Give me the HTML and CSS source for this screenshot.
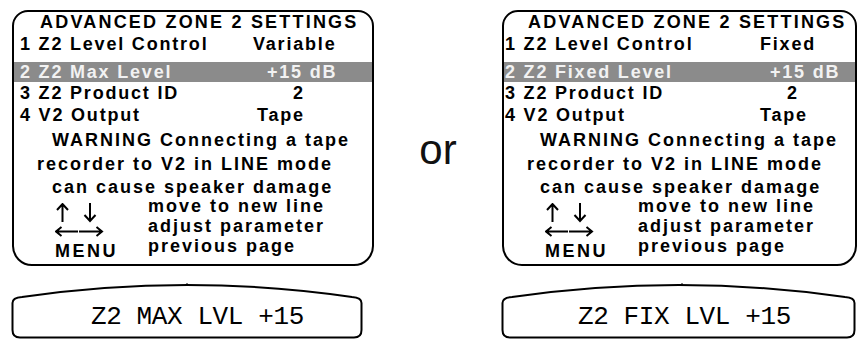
FILE: index.html
```html
<!DOCTYPE html>
<html lang="en">
<head>
  <meta charset="UTF-8">
  <title>Advanced Zone 2 Settings</title>
  <link rel="stylesheet" href="styles.css">
</head>
<body>
  <div class="sheet">

    <!-- variable level control -->
    <div class="col col-a">
      <div class="panel">
        <div class="title">ADVANCED ZONE 2 SETTINGS</div>
        <div class="row first"><span class="label">1 Z2 Level Control</span><span class="value">Variable</span></div>
        <div class="row sel"><span class="label">2 Z2 Max Level</span><span class="value val-level">+15 dB</span></div>
        <div class="row"><span class="label">3 Z2 Product ID</span><span class="value val-id">2</span></div>
        <div class="row"><span class="label">4 V2 Output</span><span class="value val-out">Tape</span></div>
        <div class="note note-1">WARNING Connecting a tape</div>
        <div class="note note-2">recorder to V2 in LINE mode</div>
        <div class="note note-3">can cause speaker damage</div>
        <div class="keys">
          <div class="keys-icons">
            <svg class="arrows" width="50" height="34" viewBox="0 0 50 34">
              <path d="M7.5 1 V19 M2 7 L7.5 1 L13 7" />
              <path d="M35 0 V18 M29.5 12 L35 18 L40.5 12" />
              <path d="M1 28.5 H23 M6.5 24 L1 28.5 L6.5 33" />
              <path d="M24 28.5 H47 M41.5 24 L47 28.5 L41.5 33" />
            </svg>
            <div class="menu">MENU</div>
          </div>
          <div class="keys-text">
            <div>move to new line</div>
            <div>adjust parameter</div>
            <div>previous page</div>
          </div>
        </div>
      </div>
      <div class="lcd">
        <svg class="lcd-frame" width="352" height="56" viewBox="0 0 352 56">
          <path d="M1.5 47 L1.5 20 Q1.5 14.5 11 14 Q176 -10 341 14 Q350.5 14.5 350.5 20 L350.5 47 Q350.5 54.5 343 54.5 L9 54.5 Q1.5 54.5 1.5 47 Z" />
          <path class="tick" d="M176 0 V3" />
        </svg>
        <div class="lcd-text">Z2 MAX LVL +15</div>
      </div>
    </div>

    <div class="divider">or</div>

    <!-- fixed level control -->
    <div class="col col-b">
      <div class="panel">
        <div class="title">ADVANCED ZONE 2 SETTINGS</div>
        <div class="row first"><span class="label">1 Z2 Level Control</span><span class="value">Fixed</span></div>
        <div class="row sel"><span class="label">2 Z2 Fixed Level</span><span class="value val-level">+15 dB</span></div>
        <div class="row"><span class="label">3 Z2 Product ID</span><span class="value val-id">2</span></div>
        <div class="row"><span class="label">4 V2 Output</span><span class="value val-out">Tape</span></div>
        <div class="note note-1">WARNING Connecting a tape</div>
        <div class="note note-2">recorder to V2 in LINE mode</div>
        <div class="note note-3">can cause speaker damage</div>
        <div class="keys">
          <div class="keys-icons">
            <svg class="arrows" width="50" height="34" viewBox="0 0 50 34">
              <path d="M7.5 1 V19 M2 7 L7.5 1 L13 7" />
              <path d="M35 0 V18 M29.5 12 L35 18 L40.5 12" />
              <path d="M1 28.5 H23 M6.5 24 L1 28.5 L6.5 33" />
              <path d="M24 28.5 H47 M41.5 24 L47 28.5 L41.5 33" />
            </svg>
            <div class="menu">MENU</div>
          </div>
          <div class="keys-text">
            <div>move to new line</div>
            <div>adjust parameter</div>
            <div>previous page</div>
          </div>
        </div>
      </div>
      <div class="lcd">
        <svg class="lcd-frame" width="355" height="56" viewBox="0 0 355 56">
          <path d="M1.5 47 L1.5 20 Q1.5 14.5 11 14 Q178 -10 344 14 Q353.5 14.5 353.5 20 L353.5 47 Q353.5 54.5 346 54.5 L9 54.5 Q1.5 54.5 1.5 47 Z" />
          <path class="tick" d="M181 0 V3" />
        </svg>
        <div class="lcd-text">Z2 FIX LVL +15</div>
      </div>
    </div>

  </div>
</body>
</html>
```

FILE: styles.css
```css
body {
  margin: 0;
  background-color: white;
  color: black;
  font-family: "Liberation Sans", Arial, sans-serif;
}

.sheet {
  display: flex;
  padding: 10px 0 0 12px;
}

.col {
  display: flex;
  flex-direction: column;
  flex-shrink: 0;
}

.col-a {
  width: 362px;
}

.col-b {
  width: 355px;
}

/* the two settings screens */
.panel {
  box-sizing: border-box;
  height: 256px;
  border: 2px solid black;
  border-radius: 16px 16px 20px 20px;
  font-size: 18px;
  font-weight: bold;
  letter-spacing: 2px;
  white-space: nowrap;
  overflow: hidden;
}

.title {
  line-height: 20px;
  padding-left: 26px;
  letter-spacing: 2.2px;
}

.row {
  display: flex;
  line-height: 22px;
  padding-left: 6px;
  letter-spacing: 1.8px;
}

.row.first {
  margin-top: 1px;
}

.row.sel {
  margin-top: 7px;
  line-height: 20px;
  background-color: #8b8b8b;
  color: #f2f2f2;
}

.label {
  flex-shrink: 0;
  width: 233px;
}

.val-level {
  padding-left: 14px;
}

.val-id {
  padding-left: 40px;
}

.val-out {
  padding-left: 4px;
}

.note {
  line-height: 22px;
  margin-top: 2px;
}

.note-1 {
  margin-top: 3px;
  padding-left: 38px;
}

.note-2 {
  padding-left: 23px;
}

.note-3 {
  margin-top: 4px;
  line-height: 17px;
  padding-left: 38px;
}

.keys {
  display: flex;
}

.keys-icons {
  box-sizing: border-box;
  width: 134px;
  padding: 7px 0 0 41px;
  display: flex;
  flex-direction: column;
}

.arrows path {
  fill: none;
  stroke: black;
  stroke-width: 2;
}

.menu {
  margin-top: 4px;
  line-height: 20px;
  letter-spacing: 2.5px;
}

.keys-text {
  line-height: 20px;
}

/* right screen sits a little tighter */
.col-b .title {
  padding-left: 24px;
}

.col-b .row {
  padding-left: 1px;
}

.col-b .label {
  width: 255px;
}

.col-b .val-level {
  padding-left: 10px;
}

.col-b .val-id {
  padding-left: 27px;
}

.col-b .val-out {
  padding-left: 0;
}

.col-b .note-1,
.col-b .note-3 {
  padding-left: 36px;
}

.divider {
  width: 128px;
  flex-shrink: 0;
  text-align: center;
  padding-top: 119px;
  font-size: 42px;
  line-height: 42px;
  color: #111;
}

/* front panel display */
.lcd {
  position: relative;
  margin-top: 17px;
  height: 56px;
}

.lcd-frame {
  position: absolute;
  top: 0;
  left: -1px;
}

.lcd-frame path {
  fill: none;
  stroke: black;
  stroke-width: 2;
}

.lcd-frame .tick {
  stroke-width: 1;
}

.lcd-text {
  position: relative;
  padding: 21px 0 0 79px;
  font-family: "Liberation Mono", monospace;
  font-size: 26px;
  line-height: 26px;
  letter-spacing: -0.4px;
  white-space: pre;
}

.col-b .lcd-text {
  padding-left: 76px;
}
```
